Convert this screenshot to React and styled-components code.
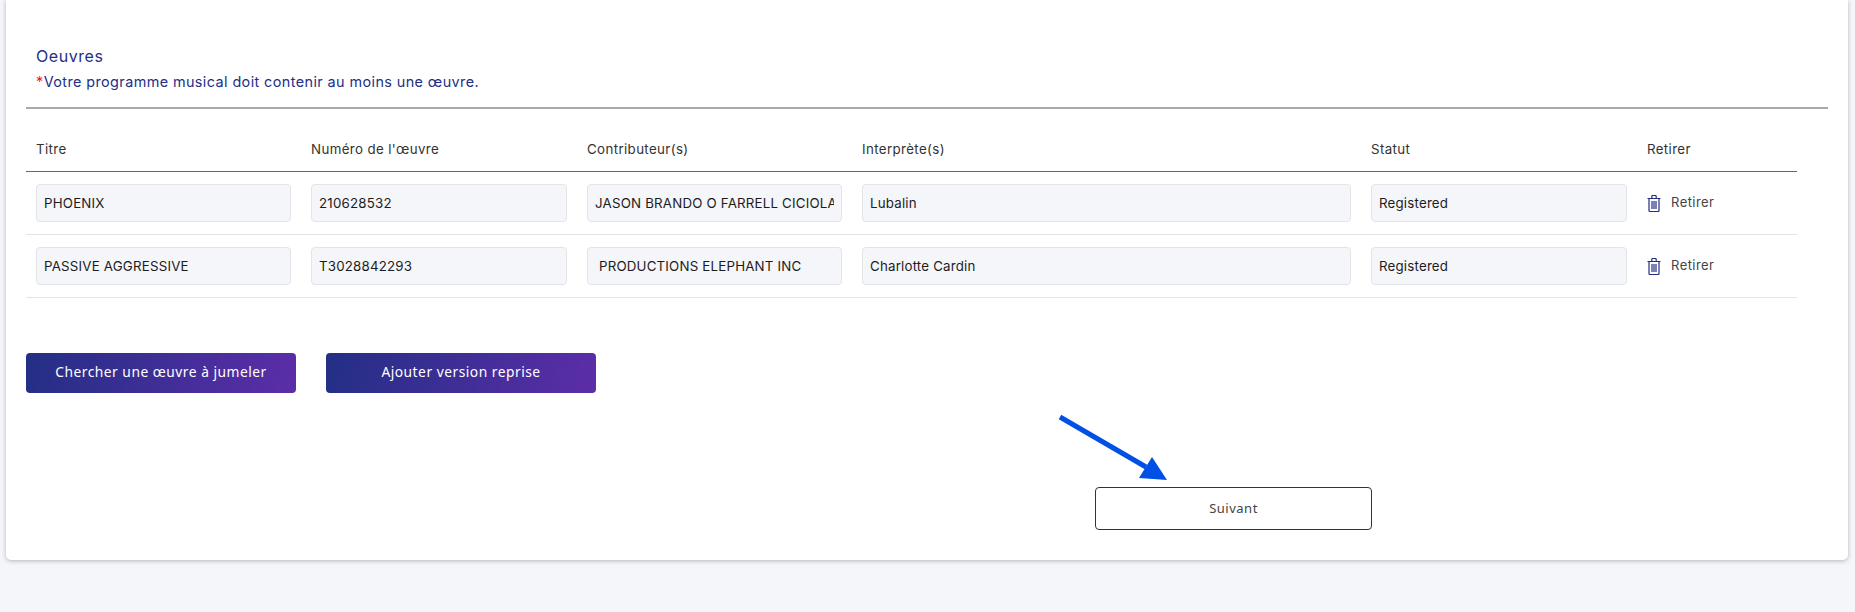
import styled, { createGlobalStyle } from 'styled-components'

const GlobalStyle = createGlobalStyle`
	html, body { margin: 0; padding: 0; background: #f5f6fa; }
	body { font-family: 'Inter', 'Liberation Sans', sans-serif; }
`
const COLS = '275px 276px 275px 509px 276px 160px'

const Page = styled.div`
	height: 612px;
	overflow: hidden;
	padding: 0 7px 0 6px;
	box-sizing: border-box;
`
const Card = styled.section`
	position: relative;
	height: 560px;
	box-sizing: border-box;
	background: #fff;
	border-radius: 0 0 5px 5px;
	box-shadow: 0 1px 4px rgba(60, 60, 70, 0.35);
	padding: 46px 20px 0;
`
const Heading = styled.h2`
	margin: 0 0 0 10px;
	font-size: 16px;
	line-height: 20px;
	font-weight: 400;
	letter-spacing: 0.55px;
	color: #232f85;
`
const Note = styled.p`
	margin: 7px 0 0 10px;
	font-size: 14.4px;
	line-height: 18px;
	letter-spacing: 0.41px;
	color: #232f85;
`
const Star = styled.span`
	color: #f01c1c;
`
const Rule = styled.hr`
	margin: 16px 0 0;
	border: 0;
	height: 2px;
	background: #a9a9a9;
`
const HeadRow = styled.div`
	display: grid;
	grid-template-columns: ${COLS};
	width: 1771px;
	height: 63px;
	box-sizing: border-box;
	align-items: center;
	padding-top: 17px;
	border-bottom: 1px solid #666;
`
const HeadCell = styled.div`
	padding: 0 10px;
	font-size: 13.3px;
	letter-spacing: 0.38px;
	color: #333;
`
const Row = styled.div`
	display: grid;
	grid-template-columns: ${COLS};
	width: 1771px;
	height: 63px;
	box-sizing: border-box;
	align-items: center;
	border-bottom: 1px solid #e3e3e6;
`
const Cell = styled.div`
	padding: 0 10px;
	min-width: 0;
`
const Field = styled.input`
	display: block;
	width: 100%;
	height: 38px;
	box-sizing: border-box;
	padding: 0 7px;
	border: 1px solid #e2e4ea;
	border-radius: 4px;
	background: #f5f6fa;
	font: 400 13.3px 'Inter', 'Liberation Sans', sans-serif;
	letter-spacing: 0.2px;
	color: #1c1c1c;
	outline: none;
`
const Remove = styled.button`
	display: flex;
	align-items: flex-start;
	gap: 10px;
	padding: 0;
	border: 0;
	background: none;
	font: 400 13px/15px 'Inter', 'Liberation Sans', sans-serif;
	letter-spacing: 0.45px;
	color: #444;
	cursor: pointer;
`
const Actions = styled.div`
	display: flex;
	gap: 30px;
	margin-top: 55px;
`
const GradientButton = styled.button`
	width: 270px;
	height: 40px;
	padding: 0 0 3px;
	border: 0;
	border-radius: 4px;
	background: linear-gradient(100deg, #232f85 0%, #5c2da8 100%);
	color: #fff;
	font: 400 13.8px 'Noto Sans', 'Liberation Sans', sans-serif;
	letter-spacing: 0.5px;
	cursor: pointer;
`
const NextButton = styled.button`
	display: block;
	width: 277px;
	height: 43px;
	margin: 94px 0 0 1069px;
	padding: 0 0 2px;
	border: 1px solid #333;
	border-radius: 4px;
	background: #fff;
	color: #444;
	font: 400 13px 'Noto Sans', 'Liberation Sans', sans-serif;
	letter-spacing: 0.5px;
	cursor: pointer;
`
const Pointer = styled.svg`
	position: absolute;
	left: 1052px;
	top: 414px;
`

const TrashIcon = () => (
	<svg width="14" height="17" viewBox="0 0 14 17" fill="none" stroke="#232f85" strokeWidth="1.2">
		<path d="M0.5 3.5h13M2 3.5v12a1 1 0 0 0 1 1h8a1 1 0 0 0 1-1v-12M4.8 3.5v-2a1 1 0 0 1 1-1h2.4a1 1 0 0 1 1 1v2M5 6v8M7 6v8M9 6v8" />
	</svg>
)

const rows = [
	['PHOENIX', '210628532', 'JASON BRANDO O FARRELL CICIOLA', 'Lubalin', 'Registered'],
	['PASSIVE AGGRESSIVE', 'T3028842293', ' PRODUCTIONS ELEPHANT INC', 'Charlotte Cardin', 'Registered'],
]
const headers = ['Titre', "Numéro de l'œuvre", 'Contributeur(s)', 'Interprète(s)', 'Statut', 'Retirer']

const App = () => {
	return (
		<Page>
			<GlobalStyle />
			<Card>
				<Heading>Oeuvres</Heading>
				<Note>
					<Star>*</Star>Votre programme musical doit contenir au moins une œuvre.
				</Note>
				<Rule />
				<HeadRow>
					{headers.map((h) => (
						<HeadCell key={h}>{h}</HeadCell>
					))}
				</HeadRow>
				{rows.map((row) => (
					<Row key={row[0]}>
						{row.map((value, i) => (
							<Cell key={i}>
								<Field readOnly value={value} />
							</Cell>
						))}
						<Cell>
							<Remove>
								<TrashIcon />
								Retirer
							</Remove>
						</Cell>
					</Row>
				))}
				<Actions>
					<GradientButton>Chercher une œuvre à jumeler</GradientButton>
					<GradientButton>Ajouter version reprise</GradientButton>
				</Actions>
				<NextButton>Suivant</NextButton>
				<Pointer width="120" height="70" viewBox="0 0 120 70">
					<path d="M2 3L88 53" stroke="#0050e6" strokeWidth="5" fill="none" />
					<path d="M94 43L109 66L81 64Z" fill="#0050e6" />
				</Pointer>
			</Card>
		</Page>
	)
}
export default App
